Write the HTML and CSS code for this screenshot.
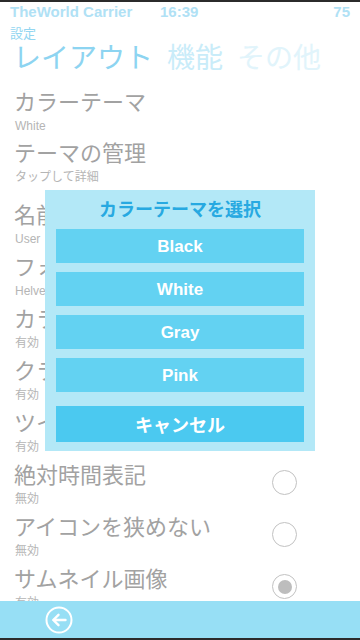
FILE: index.html
```html
<!DOCTYPE html>
<html lang="ja">
<head>
<meta charset="utf-8">
<title>設定</title>
<link rel="stylesheet" href="styles.css">
</head>
<body>
<div class="screen">
  <div class="edge"></div>
  <div class="status">
    <span class="carrier">TheWorld Carrier</span>
    <span class="time">16:39</span>
    <span class="battery">75</span>
  </div>
  <div class="crumb">設定</div>
  <div class="tabs">
    <span class="tab on">レイアウト</span>
    <span class="tab mid">機能</span>
    <span class="tab far">その他</span>
  </div>
  <div class="list">
    <div class="item short"><div class="text"><div class="ttl">カラーテーマ</div><div class="sub">White</div></div></div>
    <div class="item short gapafter"><div class="text"><div class="ttl">テーマの管理</div><div class="sub">タップして詳細</div></div></div>
    <div class="item"><div class="text"><div class="ttl">名前</div><div class="sub">User</div></div></div>
    <div class="item"><div class="text"><div class="ttl">フォ</div><div class="sub">Helve</div></div></div>
    <div class="item"><div class="text"><div class="ttl">カラ</div><div class="sub">有効</div></div><span class="radio checked"></span></div>
    <div class="item"><div class="text"><div class="ttl">クラ</div><div class="sub">有効</div></div><span class="radio checked"></span></div>
    <div class="item"><div class="text"><div class="ttl">ツイ</div><div class="sub">有効</div></div><span class="radio checked"></span></div>
    <div class="item"><div class="text"><div class="ttl">絶対時間表記</div><div class="sub">無効</div></div><span class="radio"></span></div>
    <div class="item"><div class="text"><div class="ttl">アイコンを狭めない</div><div class="sub">無効</div></div><span class="radio"></span></div>
    <div class="item"><div class="text"><div class="ttl">サムネイル画像</div><div class="sub">有効</div></div><span class="radio checked"></span></div>
  </div>
  <div class="bottombar">
    <svg class="back" width="28" height="28" viewBox="0 0 28 28" aria-label="戻る">
      <circle cx="14" cy="14" r="12.5" fill="none" stroke="#ffffff" stroke-width="2"/>
      <path d="M20.5 14H8.5M13.5 8.8L8.2 14L13.5 19.2" fill="none" stroke="#ffffff" stroke-width="2.4" stroke-linecap="round" stroke-linejoin="round"/>
    </svg>
  </div>
  <div class="edge bottom"></div>

  <div class="dialog">
    <div class="dtitle">カラーテーマを選択</div>
    <div class="opt">Black</div>
    <div class="opt">White</div>
    <div class="opt">Gray</div>
    <div class="opt">Pink</div>
    <div class="opt cancel">キャンセル</div>
  </div>
</div>
</body>
</html>
```

FILE: styles.css
```css
html, body {
  margin: 0;
  padding: 0;
  background: #ffffff;
}

.screen {
  position: relative;
  width: 360px;
  height: 640px;
  overflow: hidden;
  display: flex;
  flex-direction: column;
  font-family: "Liberation Sans", "Noto Sans CJK JP", sans-serif;
  background: #ffffff;
}

.edge {
  height: 2px;
  background: #2b2b2b;
  flex: none;
}

.status {
  flex: none;
  display: flex;
  height: 18px;
  padding: 2px 10px 0 10px;
  font-size: 15px;
  font-weight: bold;
  line-height: 16px;
  color: #b0e1f5;
}

.carrier {
  width: 150px;
}

.battery {
  margin-left: auto;
}

.crumb {
  flex: none;
  margin-top: 5px;
  padding-left: 10px;
  font-size: 13px;
  line-height: 13px;
  color: #93d6f1;
}

.tabs {
  flex: none;
  display: flex;
  gap: 14px;
  padding-left: 13px;
  font-size: 28px;
  line-height: 32px;
  font-family: "Noto Sans CJK JP", sans-serif;
}

.tab.on { color: #8dd4f1; }
.tab.mid { color: #c9ecf9; }
.tab.far { color: #e1f4fb; }

.list {
  flex: 1;
  overflow: hidden;
  padding-top: 21px;
}

.item {
  display: flex;
  align-items: flex-start;
  height: 52px;
  padding-left: 14px;
  padding-right: 63px;
  box-sizing: border-box;
}

.item.short {
  height: 51px;
}

.item.gapafter {
  margin-bottom: 11px;
}

.text {
  flex: 1;
  min-width: 0;
}

.ttl {
  font-family: "Noto Sans CJK JP", sans-serif;
  font-size: 22px;
  line-height: 26px;
  margin-top: -6px;
  color: #a2a2a2;
  white-space: nowrap;
}

.sub {
  margin-top: 6px;
  font-size: 12px;
  line-height: 14px;
  color: #b5b5b5;
  padding-left: 1px;
  white-space: nowrap;
}

.radio {
  flex: none;
  width: 25px;
  height: 25px;
  margin-top: 4px;
  box-sizing: border-box;
  border: 1.5px solid #c2c2c2;
  border-radius: 50%;
  display: flex;
  align-items: center;
  justify-content: center;
}

.radio.checked::after {
  content: "";
  width: 14px;
  height: 14px;
  border-radius: 50%;
  background: #bdbdbd;
}

.bottombar {
  flex: none;
  height: 37px;
  background: #97dff5;
  display: flex;
  align-items: center;
  padding-left: 45px;
}

.back {
  display: block;
}

.dialog {
  position: absolute;
  left: 45px;
  top: 190px;
  width: 270px;
  height: 261px;
  box-sizing: border-box;
  padding: 0 11px 9px 11px;
  background: #b3e8f7;
  display: flex;
  flex-direction: column;
}

.dtitle {
  height: 39px;
  line-height: 37px;
  text-align: center;
  font-family: "Noto Sans CJK JP", sans-serif;
  font-size: 18px;
  font-weight: bold;
  color: #27a9e1;
}

.opt {
  height: 34px;
  margin-bottom: 9px;
  background: #63d2f2;
  color: #ffffff;
  font-size: 17px;
  font-weight: bold;
  line-height: 34px;
  padding-top: 1px;
  box-sizing: border-box;
  text-align: center;
}

.opt.cancel {
  height: 36px;
  line-height: 36px;
  padding-top: 0;
  margin-top: 5px;
  margin-bottom: 0;
  background: #4bc9f0;
  font-family: "Noto Sans CJK JP", sans-serif;
  font-size: 18px;
}
```
